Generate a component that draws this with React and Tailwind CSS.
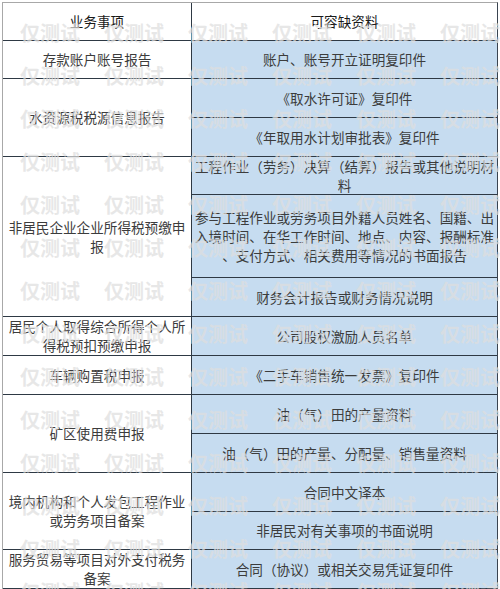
import React from "react";

const font = { fontFamily: '"Noto Sans CJK SC", "Noto Sans", sans-serif' };

// 左列：事项（行号从 2 开始，1 为表头）
const leftCells = [
  { rows: "row-start-2 row-span-1", lines: ["存款账户账号报告"] },
  { rows: "row-start-3 row-span-2", lines: ["水资源税税源信息报告"] },
  { rows: "row-start-5 row-span-3", lines: ["非居民企业企业所得税预缴申", "报"] },
  { rows: "row-start-8 row-span-1", lines: ["居民个人取得综合所得个人所", "得税预扣预缴申报"] },
  { rows: "row-start-9 row-span-1", lines: ["车辆购置税申报"] },
  { rows: "row-start-10 row-span-2", lines: ["矿区使用费申报"] },
  { rows: "row-start-12 row-span-2", lines: ["境内机构和个人发包工程作业", "或劳务项目备案"] },
  { rows: "row-start-14 row-span-1", lines: ["服务贸易等项目对外支付税务", "备案"] },
];

// 右列：可容缺资料，每行一格
const rightCells = [
  ["账户、账号开立证明复印件"],
  ["《取水许可证》复印件"],
  ["《年取用水计划审批表》复印件"],
  ["工程作业（劳务）决算（结算）报告或其他说明材", "料"],
  [
    "参与工程作业或劳务项目外籍人员姓名、国籍、出",
    "入境时间、在华工作时间、地点、内容、报酬标准",
    "、支付方式、相关费用等情况的书面报告",
  ],
  ["财务会计报告或财务情况说明"],
  ["公司股权激励人员名单"],
  ["《二手车销售统一发票》复印件"],
  ["油（气）田的产量资料"],
  ["油（气）田的产量、分配量、销售量资料"],
  ["合同中文译本"],
  ["非居民对有关事项的书面说明"],
  ["合同（协议）或相关交易凭证复印件"],
];

const rightRows = [
  "row-start-2", "row-start-3", "row-start-4", "row-start-5", "row-start-6",
  "row-start-7", "row-start-8", "row-start-9", "row-start-10", "row-start-11",
  "row-start-12", "row-start-13", "row-start-14",
];

export default function App() {
  const marks = Array.from({ length: 84 });

  return (
    <div className="relative w-[500px] h-[589px] bg-white overflow-hidden pt-[2px] pl-[2px]" style={font}>
      <div className="w-[496px] border-t border-l border-[#a8a8a8] border-r border-r-[#3a4450] grid grid-cols-[188px_1fr] grid-rows-[38px_38px_39px_39px_38px_83px_39px_39px_39px_39px_39px_39px_38px_39px] text-[13.6px] leading-[19px] text-[#3c3c3c]">
        {/* 表头 */}
        <div className="row-start-1 col-start-1 flex items-center justify-center border-b border-[#2e3944] text-[#1a1a1a]">
          业务事项
        </div>
        <div className="row-start-1 col-start-2 flex items-center justify-center border-b border-l border-[#2e3944] text-[#1a1a1a]">
          可容缺资料
        </div>

        {leftCells.map((c, i) => (
          <div
            key={i}
            className={`${c.rows} col-start-1 flex flex-col items-center justify-center border-b border-[#2e3944] bg-white`}
          >
            {c.lines.map((l, j) => (
              <div key={j} className="whitespace-nowrap">{l}</div>
            ))}
          </div>
        ))}

        {rightCells.map((lines, i) => (
          <div
            key={i}
            className={`${rightRows[i]} col-start-2 flex flex-col items-center justify-center border-b border-l border-[#2e3944] bg-[#c6dcf0]`}
          >
            {lines.map((l, j) => (
              <div key={j} className="whitespace-nowrap">{l}</div>
            ))}
          </div>
        ))}
      </div>

      {/* 水印 */}
      <div className="pointer-events-none absolute top-[24px] left-[20px] grid grid-cols-[repeat(6,84px)] auto-rows-[43px]">
        {marks.map((_, i) => (
          <div key={i} className="text-[20px] leading-[18px] font-bold text-[rgba(222,222,222,0.72)] whitespace-nowrap">
            仅测试
          </div>
        ))}
      </div>
    </div>
  );
}
